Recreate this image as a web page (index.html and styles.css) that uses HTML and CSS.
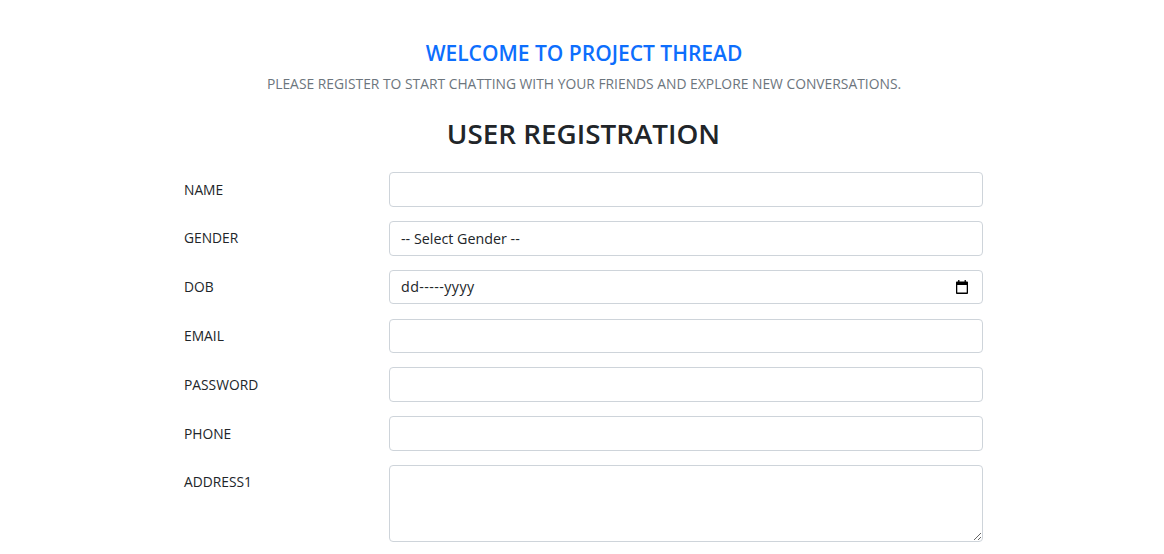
FILE: index.html
```html
<!DOCTYPE html>
<html lang="en">
<head>
    <meta charset="UTF-8">
    <meta name="viewport" content="width=device-width, initial-scale=1.0">
    <title>User Registration | Project Thread</title>
    <link rel="stylesheet" href="styles.css">
</head>
<body>
    <header class="intro">
        <h4>WELCOME TO PROJECT THREAD</h4>
        <p>PLEASE REGISTER TO START CHATTING WITH YOUR FRIENDS AND EXPLORE NEW CONVERSATIONS.</p>
    </header>
    <section class="register">
        <h2>USER REGISTRATION</h2>
        <form class="register-form">
            <div class="form-row">
                <label for="name">NAME</label>
                <input class="form-control" type="text" id="name">
            </div>
            <div class="form-row">
                <label for="gender">GENDER</label>
                <select class="form-control" id="gender">
                    <option value="">-- Select Gender --</option>
                    <option value="male">Male</option>
                    <option value="female">Female</option>
                </select>
            </div>
            <div class="form-row">
                <label for="dob">DOB</label>
                <div class="date-field">
                    <input class="form-control date-input" type="text" id="dob" value="dd-----yyyy">
                    <svg class="date-icon" viewBox="1 1 14 14" preserveAspectRatio="none" aria-hidden="true">
                        <path fill="#000" d="M3.500 1H5v1.500h6V1h1.500v1.500H14A1 1 0 0 1 15 3.500V14a1 1 0 0 1-1 1H2a1 1 0 0 1-1-1V3.500a1 1 0 0 1 1-1h1.500zM2.500 6v7.500h11V6z"/>
                    </svg>
                </div>
            </div>
            <div class="form-row">
                <label for="email">EMAIL</label>
                <input class="form-control" type="email" id="email">
            </div>
            <div class="form-row">
                <label for="password">PASSWORD</label>
                <input class="form-control" type="password" id="password">
            </div>
            <div class="form-row">
                <label for="phone">PHONE</label>
                <input class="form-control" type="text" id="phone">
            </div>
            <div class="form-row">
                <label for="address1">ADDRESS1</label>
                <textarea class="form-control address" id="address1"></textarea>
            </div>
        </form>
    </section>
</body>
</html>
```

FILE: styles.css
```css
/* General Body Styling */
body {
    font-family: 'Open Sans', 'Noto Sans', sans-serif;
    margin: 0;
    padding: 0;
    background-color: #fff;
    color: #212529;
}

/* Intro */
.intro {
    padding: 39px 0 0 4px;
    text-align: center;
}

.intro h4 {
    margin: 0;
    font-size: 21px;
    line-height: 29px;
    font-weight: 600;
    color: #0d6efd;
}

.intro p {
    margin: 6px 0 0;
    font-size: 13.850px;
    line-height: 20px;
    color: #6c757d;
}

/* Form */
.register h2 {
    margin: 20px 0 0;
    padding-left: 3px;
    font-size: 27.800px;
    line-height: 38px;
    font-weight: 600;
    text-align: center;
}

.register-form {
    width: 800px;
    margin: 20.200px 0 12px 183px;
}

.form-row {
    display: grid;
    grid-template-columns: 206px 594px;
    margin-bottom: 14px;
}

.form-row label {
    font-size: 13.800px;
    line-height: 18px;
    padding: 8.500px 0 0 1px;
}

.form-control {
    display: block;
    box-sizing: border-box;
    width: 100%;
    height: 34.800px;
    padding: 6px 11px;
    font-family: inherit;
    font-size: 14.300px;
    color: #212529;
    background: #fff;
    border: 1px solid #ced4da;
    border-radius: 4px;
    appearance: none;
    outline: none;
}

.address {
    height: 77px;
    resize: vertical;
    appearance: auto;
}

/* Date field */
.date-field {
    position: relative;
}

.date-input {
    height: 34.400px;
    margin-bottom: 0.400px;
    letter-spacing: 0.400px;
}

.date-icon {
    position: absolute;
    top: 10px;
    right: 15px;
    width: 12px;
    height: 14px;
}
```
